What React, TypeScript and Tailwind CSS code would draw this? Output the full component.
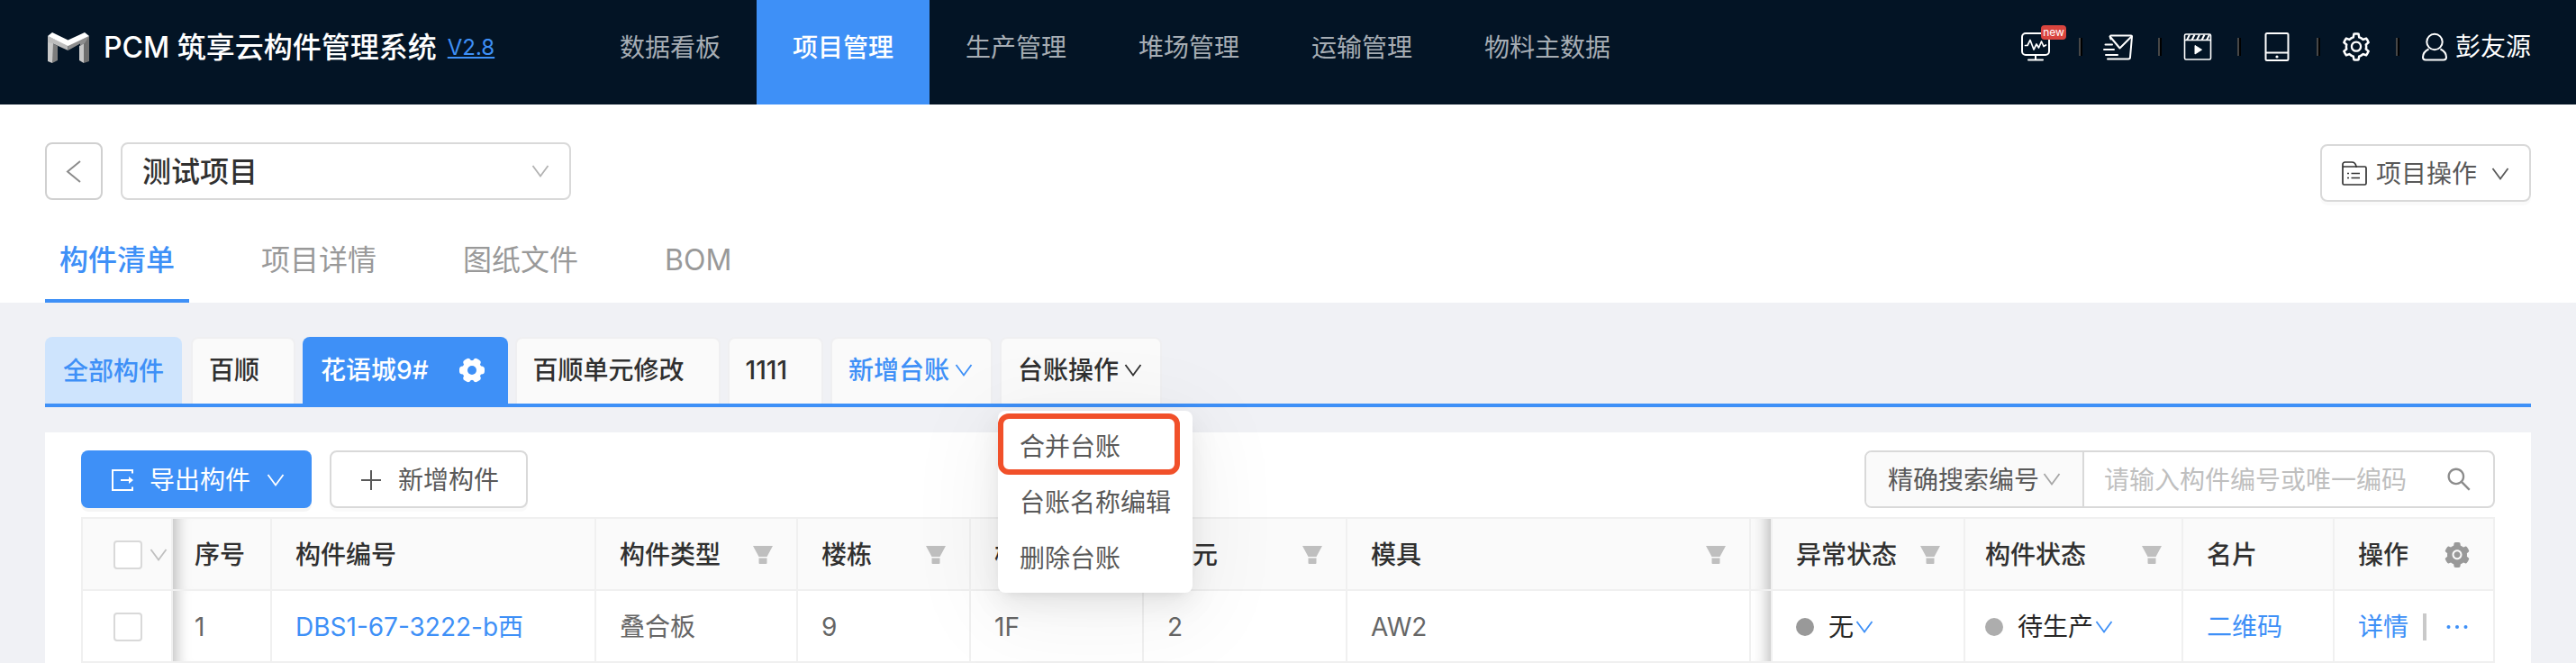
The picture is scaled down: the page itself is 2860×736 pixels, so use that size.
import type { ReactNode } from "react";
import {
  AiFillSetting,
  AiOutlineSearch,
  AiOutlineSetting,
} from "react-icons/ai";

function Chevron({ className = "" }: { className?: string }) {
  return (
    <svg viewBox="0 0 24 24" className={`size-6 shrink-0 ${className}`} fill="none" stroke="currentColor" strokeWidth="1.8" aria-hidden="true">
      <path d="M3.500 6 12 17.500 20.500 6" />
    </svg>
  );
}

function Logo() {
  return (
    <svg viewBox="0 0 46 34" className="h-[34px] w-[46px]" aria-hidden="true">
      <path d="M0 4 6 8v23l-1 3-5-2z" fill="#c9c9c9" />
      <path d="M6 12.500 11 15v16l-6 3z" fill="#7d7d7d" />
      <path d="M35 15l5-3v22l-5-3z" fill="#c9c9c9" />
      <path d="M40 8l6-4v28l-6 2z" fill="#6f6f6f" />
      <path d="M0 4 22.500 14v6L6 12.500 0 11z" fill="#bdbdbd" />
      <path d="M22.500 14 46 4l-5 8-5 3v-2.500L22.500 20z" fill="#8d8d8d" />
      <path d="M0 4 5 0l17.500 8.500L41 0l5 4-23.500 11z" fill="#fff" />
    </svg>
  );
}

function MonitorIcon() {
  return (
    <svg viewBox="0 0 32 32" className="size-8" fill="none" stroke="#fff" strokeWidth="2" strokeLinecap="round" strokeLinejoin="round" aria-hidden="true">
      <rect x="1" y="1" width="30" height="24" rx="4" />
      <path d="M4.500 14.500H7l3-6L14 19l3-6 2.500 4 3-7 2.500 5.500 2.500-1.500" strokeWidth="1.700" />
      <path d="M16 25v5M8 30.500h16" />
    </svg>
  );
}

function SendIcon() {
  return (
    <svg viewBox="0 0 34 34" className="size-[34px]" fill="none" stroke="#fff" strokeWidth="2" strokeLinecap="round" strokeLinejoin="round" aria-hidden="true">
      <path d="M8.500 8.500 7.500 5.500l1-1H31a1 1 0 0 1 1 1L30 28.500a2 2 0 0 1-2 2H5" />
      <path d="M8 6 18.500 18.500 31.500 5.500" />
      <path d="M2.500 14.500h7.500M1 20h11M3 26h13" />
    </svg>
  );
}

function VideoIcon() {
  return (
    <svg viewBox="0 0 32 32" className="size-8" fill="none" stroke="#fff" aria-hidden="true">
      <rect x="1.500" y="2" width="29" height="28" rx="1.500" strokeWidth="1.600" />
      <path d="M1.500 8.500h29" strokeWidth="1.600" />
      <path d="M4 8.500 7 2.500M9.500 8.500l3-6M15 8.500l3-6M20.500 8.500l3-6M26 8.500l3-6" strokeWidth="2" />
      <path d="M13 14.500v9.500l7.500-4.800z" fill="#fff" strokeLinejoin="round" />
    </svg>
  );
}

function TabletIcon() {
  return (
    <svg viewBox="0 0 32 32" className="size-8" fill="none" stroke="#fff" strokeWidth="2" aria-hidden="true">
      <rect x="3.500" y="1" width="25" height="30" rx="1.500" />
      <path d="M3.500 22.500h25" />
      <circle cx="16" cy="27" r="1.600" fill="#fff" stroke="none" />
    </svg>
  );
}

function UserIcon() {
  return (
    <svg viewBox="0 0 30 32" className="h-8 w-[30px]" fill="none" stroke="#fff" strokeWidth="2" aria-hidden="true">
      <circle cx="15" cy="10.500" r="8.700" />
      <path d="M8.500 18.500C4.500 20.500 2 23.500 2 27.500c0 2 1.200 3 3 3h20c1.800 0 3-1 3-3 0-4-2.500-7-6.500-9" />
    </svg>
  );
}

function FolderIcon() {
  return (
    <svg viewBox="0 0 28 28" className="size-7" fill="none" stroke="#333" strokeWidth="1.700" aria-hidden="true">
      <path d="M1 6V3.500A2.500 2.500 0 0 1 3.500 1H11c3 0 4.500 1.500 5 5h9.500A1.500 1.500 0 0 1 27 7.500v17a1.500 1.500 0 0 1-1.500 1.500h-23A1.500 1.500 0 0 1 1 24.500z" />
      <path d="M1 6.500A2 2 0 0 1 2.500 6H17" />
      <path d="M6 13.500h2M6 18.500h2M10.500 13.500h9.500M10.500 18.500h9.500" />
    </svg>
  );
}

function ExportIcon() {
  return (
    <svg viewBox="0 0 28 28" className="size-7" fill="none" stroke="currentColor" strokeWidth="2" aria-hidden="true">
      <path d="M25 6.500V3H3v22h22v-3.500" />
      <path d="M12 14h12" />
      <path d="M21 10l5 4-5 4z" fill="currentColor" stroke="none" />
    </svg>
  );
}

function PlusIcon() {
  return (
    <svg viewBox="0 0 28 28" className="size-7" stroke="currentColor" strokeWidth="2" aria-hidden="true">
      <path d="M14 3v22M3 14h22" />
    </svg>
  );
}

function CogIcon() {
  return (
    <svg viewBox="0 0 28 28" className="size-7" fill="#fff" aria-hidden="true">
      <circle cx="14" cy="14" r="11" />
      <rect x="0" y="9.500" width="28" height="9" rx="3.500" />
      <rect x="0" y="9.500" width="28" height="9" rx="3.500" transform="rotate(60 14 14)" />
      <rect x="0" y="9.500" width="28" height="9" rx="3.500" transform="rotate(120 14 14)" />
      <circle cx="14" cy="14" r="5" fill="#3e90f7" />
    </svg>
  );
}

function FilterIcon() {
  return (
    <svg viewBox="0 0 22 20" className="h-5 w-[22px]" fill="#bfbfbf" aria-hidden="true">
      <path d="M0 0h22l-6.500 12h-9zM6.500 13.500h9V19a1 1 0 0 1-1 1h-7a1 1 0 0 1-1-1z" />
    </svg>
  );
}

function MoreIcon() {
  return (
    <svg viewBox="0 0 28 28" className="size-7" fill="currentColor" aria-hidden="true">
      <circle cx="4.500" cy="14" r="2" />
      <circle cx="14" cy="14" r="2" />
      <circle cx="23.500" cy="14" r="2" />
    </svg>
  );
}

const navItems = ["数据看板", "项目管理", "生产管理", "堆场管理", "运输管理", "物料主数据"];
const pageTabs = ["构件清单", "项目详情", "图纸文件", "BOM"];
const menuItems = ["合并台账", "台账名称编辑", "删除台账"];

const ledgerTab =
  "flex h-[74px] items-center rounded-t-lg border-x-2 border-t-2 border-[#efeff1] bg-[#fafafa] font-medium";

function Divider() {
  return <span className="h-5 w-1 border-r-2 border-l-2 border-r-black border-l-[#474747]" />;
}

function ToolButton({ label, children }: { label: string; children: ReactNode }) {
  return (
    <button type="button" aria-label={label} className="flex w-[84px] items-center justify-center pr-1 text-white">
      {children}
    </button>
  );
}

function Th({ children, filter = false, className = "" }: { children?: ReactNode; filter?: boolean; className?: string }) {
  return (
    <th className={`h-20 border-r-2 border-b-2 border-[#f0f0f0] bg-[#fafafa] pt-0.5 pb-0 text-left font-medium whitespace-nowrap text-[#303030] ${className}`}>
      <div className="flex items-center justify-between">
        {children}
        {filter && (
          <button type="button" aria-label="筛选">
            <FilterIcon />
          </button>
        )}
      </div>
    </th>
  );
}

function Td({ children, className = "" }: { children?: ReactNode; className?: string }) {
  return (
    <td className={`h-20 border-r-2 border-b-2 border-[#f0f0f0] pt-0.5 pb-0 whitespace-nowrap text-[#666] ${className}`}>
      {children}
    </td>
  );
}

function Tick({ label }: { label: string }) {
  return (
    <input
      type="checkbox"
      aria-label={label}
      className="block size-8 shrink-0 appearance-none rounded border-2 border-[#d9d9d9] bg-white checked:bg-[#3e90f7]"
    />
  );
}

function Status({ text, dot }: { text: string; dot: string }) {
  return (
    <button type="button" className="flex items-center text-[#262626]">
      <span className={`mr-4 size-5 rounded-full ${dot}`} />
      {text}
      <Chevron className="text-[#3e90f7]" />
    </button>
  );
}

export default function App() {
  return (
    <div className="min-h-screen bg-[#f0f1f5] font-['Inter','Noto_Sans_CJK_SC',sans-serif] text-[28px] leading-10">
      <header className="flex h-[116px] items-stretch bg-[#031425] px-[50px]">
        <div className="flex w-[598px] items-center pb-2.5 pl-[3px] whitespace-nowrap">
          <Logo />
          <h1 className="ml-4 text-[32px] font-medium text-white">PCM 筑享云构件管理系统</h1>
          <a href="#version" className="ml-3 text-2xl text-[#3e90f7] underline underline-offset-2">V2.8</a>
        </div>
        <nav className="flex">
          {navItems.map((item) => (
            <a
              key={item}
              href="#nav"
              className={
                item === "项目管理"
                  ? "flex items-center bg-[#3e90f7] px-10 pb-2.5 font-medium whitespace-nowrap text-white"
                  : "flex items-center px-10 pb-2.5 whitespace-nowrap text-[#a6adb4]"
              }
            >
              {item}
            </a>
          ))}
        </nav>
        <div className="ml-auto flex items-center pb-3">
          <button type="button" aria-label="数据监控" className="relative mr-8">
            <MonitorIcon />
            <span className="absolute -top-2 left-[22px] flex h-4 w-7 items-center justify-center rounded bg-[#d9453f] text-xs leading-4 text-white">
              new
            </span>
          </button>
          <Divider />
          <ToolButton label="消息"><SendIcon /></ToolButton>
          <Divider />
          <ToolButton label="视频"><VideoIcon /></ToolButton>
          <Divider />
          <ToolButton label="平板"><TabletIcon /></ToolButton>
          <Divider />
          <ToolButton label="设置"><AiOutlineSetting className="size-9" /></ToolButton>
          <Divider />
          <button type="button" className="ml-6 flex items-center gap-2 text-white">
            <UserIcon />
            彭友源
          </button>
        </div>
      </header>

      <section className="bg-white px-[50px] pt-[42px]">
        <div className="flex items-start">
          <button type="button" aria-label="返回" className="flex size-16 items-center justify-center rounded-lg border-2 border-[#d0d0d0] text-[#8c8c8c]">
            <svg viewBox="0 0 28 28" className="size-7" fill="none" stroke="currentColor" strokeWidth="2" aria-hidden="true">
              <path d="M21 3 7 14.500 21 26" />
            </svg>
          </button>
          <div className="relative ml-5 w-[500px]">
            <select aria-label="项目" className="h-16 w-full appearance-none rounded-lg border-2 border-[#d9d9d9] bg-white pt-0.5 pr-14 pl-[22px] text-[32px] font-medium text-[#303030]">
              <option>测试项目</option>
            </select>
            <Chevron className="pointer-events-none absolute top-5 right-[22px] text-[#b3b3b3]" />
          </div>
          <button type="button" className="mt-0.5 ml-auto flex h-16 items-center rounded-lg border-2 border-[#d9d9d9] bg-white pt-0.5 pr-5 pl-[22px] text-[#595959] shadow-[0_4px_0_rgba(0,0,0,0.02)]">
            <FolderIcon />
            <span className="mr-3.5 ml-2.5">项目操作</span>
            <Chevron />
          </button>
        </div>
        <nav className="mt-5 flex gap-16">
          {pageTabs.map((tab, index) => (
            <a
              key={tab}
              href="#tab"
              className={
                index === 0
                  ? "flex h-[92px] items-center border-b-4 border-[#3e90f7] px-4 pt-0.5 text-[32px] font-medium text-[#3e90f7]"
                  : "flex h-[92px] items-center border-b-4 border-transparent px-4 pt-0.5 text-[32px] text-[#999]"
              }
            >
              {tab}
            </a>
          ))}
        </nav>
      </section>

      <main className="px-[50px] pt-[38px]">
        <div className="flex gap-2.5 border-b-4 border-[#3e90f7] whitespace-nowrap">
          <button type="button" className="flex h-[74px] items-center rounded-t-lg bg-[#cee4fd] px-5 pt-0.5 font-medium text-[#3e90f7]">
            全部构件
          </button>
          <div className="flex gap-2">
            <button type="button" className={`${ledgerTab} pr-[38px] pb-0.5 pl-[18px] text-[#303030]`}>百顺</button>
            <button type="button" className="flex h-[74px] items-center gap-[34px] rounded-t-lg bg-[#3e90f7] pr-[26px] pl-5 font-medium text-white">
              花语城9#
              <CogIcon />
            </button>
            <button type="button" className={`${ledgerTab} pr-[38px] pb-0.5 pl-[18px] text-[#303030]`}>百顺单元修改</button>
            <button type="button" className={`${ledgerTab} pr-[38px] pb-0.5 pl-[18px] text-[#303030]`}>1111</button>
            <button type="button" className={`${ledgerTab} gap-1 px-[18px] pb-0.5 text-[#3e90f7]`}>
              新增台账
              <Chevron />
            </button>
            <div className="relative">
              <button type="button" aria-expanded="true" className={`${ledgerTab} gap-1 px-[18px] pb-0.5 text-[#303030]`}>
                台账操作
                <Chevron />
              </button>
              <div role="menu" className="absolute top-[82px] -left-0.5 z-10 flex w-[216px] flex-col rounded-lg bg-white py-2 text-[#595959] shadow-[0_6px_12px_-8px_rgba(0,0,0,0.12),0_12px_32px_rgba(0,0,0,0.08),0_18px_96px_16px_rgba(0,0,0,0.05)]">
                {menuItems.map((item) => (
                  <button key={item} type="button" role="menuitem" className="h-[62px] px-6 pt-0.5 text-left">
                    {item}
                  </button>
                ))}
                <span className="pointer-events-none absolute top-[3px] left-0 h-[68px] w-[202px] rounded-xl border-6 border-[#f1502a]" />
              </div>
            </div>
          </div>
        </div>

        <section className="mt-7 bg-white px-10 pt-5">
          <div className="flex items-center gap-5">
            <button type="button" className="flex h-16 items-center gap-4 rounded-lg bg-[#3e90f7] pt-0.5 pr-7 pl-8 text-white shadow-[0_4px_0_rgba(0,0,0,0.04)]">
              <ExportIcon />
              导出构件
              <Chevron />
            </button>
            <button type="button" className="flex h-16 items-center gap-4 rounded-lg border-2 border-[#d9d9d9] bg-white px-[30px] pt-0.5 text-[#595959] shadow-[0_4px_0_rgba(0,0,0,0.02)]">
              <PlusIcon />
              新增构件
            </button>
            <form className="ml-auto flex h-16 w-[700px] overflow-hidden rounded-lg border-2 border-[#d9d9d9]">
              <div className="relative w-[242px] border-r-2 border-[#d9d9d9] bg-[#fafafa]">
                <select aria-label="搜索方式" className="h-full w-full appearance-none bg-transparent pt-0.5 pl-6 text-[#595959]">
                  <option>精确搜索编号</option>
                </select>
                <Chevron className="pointer-events-none absolute top-[18px] right-[22px] text-[#a6a6a6]" />
              </div>
              <input
                type="text"
                aria-label="构件编号"
                placeholder="请输入构件编号或唯一编码"
                className="min-w-0 flex-1 pt-0.5 pl-[22px] text-[#595959] outline-none placeholder:text-[#bfbfbf]"
              />
              <button type="submit" aria-label="搜索" className="mr-[22px] text-[#8c8c8c]">
                <AiOutlineSearch className="size-8" />
              </button>
            </form>
          </div>

          <table className="mt-2.5 w-full table-fixed border-separate border-spacing-0 border-t-2 border-l-2 border-[#f0f0f0]">
            <colgroup>
              <col className="w-[100px]" />
              <col className="w-[110px]" />
              <col className="w-[360px]" />
              <col className="w-[224px]" />
              <col className="w-[192px]" />
              <col className="w-[192px]" />
              <col className="w-[226px]" />
              <col />
              <col className="w-[24px]" />
              <col className="w-[214px]" />
              <col className="w-[242px]" />
              <col className="w-[168px]" />
              <col className="w-[178px]" />
            </colgroup>
            <thead>
              <tr>
                <Th className="border-r-0 pl-[34px]">
                  <div className="flex items-center gap-1.5">
                    <Tick label="全选" />
                    <Chevron className="text-[#bfbfbf]" />
                  </div>
                </Th>
                <Th className="pl-6 shadow-[inset_20px_0_16px_-16px_rgba(0,0,0,0.25)]">序号</Th>
                <Th className="px-[26px]">构件编号</Th>
                <Th className="px-[26px]" filter>构件类型</Th>
                <Th className="px-[26px]" filter>楼栋</Th>
                <Th className="px-[26px]" filter>楼层</Th>
                <Th className="px-[26px]" filter>单元</Th>
                <Th className="px-[26px]" filter>模具</Th>
                <Th className="shadow-[inset_-20px_0_16px_-16px_rgba(0,0,0,0.25)]" />
                <Th className="px-[26px]" filter>异常状态</Th>
                <Th className="px-[22px]" filter>构件状态</Th>
                <Th className="px-[26px]">名片</Th>
                <Th className="pr-6 pl-[26px]">
                  操作
                  <button type="button" aria-label="列设置" className="text-[#999]">
                    <AiFillSetting className="size-8" />
                  </button>
                </Th>
              </tr>
            </thead>
            <tbody>
              <tr>
                <Td className="border-r-0 pl-[34px]"><Tick label="选择第1行" /></Td>
                <Td className="pl-6 shadow-[inset_20px_0_16px_-16px_rgba(0,0,0,0.25)]">1</Td>
                <Td className="px-[26px]"><a href="#item" className="text-[#3e90f7]">DBS1-67-3222-b西</a></Td>
                <Td className="px-[26px]">叠合板</Td>
                <Td className="px-[26px]">9</Td>
                <Td className="px-[26px]">1F</Td>
                <Td className="px-[26px]">2</Td>
                <Td className="px-[26px]">AW2</Td>
                <Td className="shadow-[inset_-20px_0_16px_-16px_rgba(0,0,0,0.25)]" />
                <Td className="px-[26px]"><Status text="无" dot="bg-[#999]" /></Td>
                <Td className="px-[22px]"><Status text="待生产" dot="bg-[#adadad]" /></Td>
                <Td className="px-[26px]"><a href="#card" className="text-[#3e90f7]">二维码</a></Td>
                <Td className="px-[26px]">
                  <div className="flex items-center text-[#3e90f7]">
                    <a href="#detail">详情</a>
                    <span className="mr-5 ml-4 h-[30px] w-1 bg-[#c9c9c9]" />
                    <button type="button" aria-label="更多"><MoreIcon /></button>
                  </div>
                </Td>
              </tr>
            </tbody>
          </table>
        </section>
      </main>
    </div>
  );
}
